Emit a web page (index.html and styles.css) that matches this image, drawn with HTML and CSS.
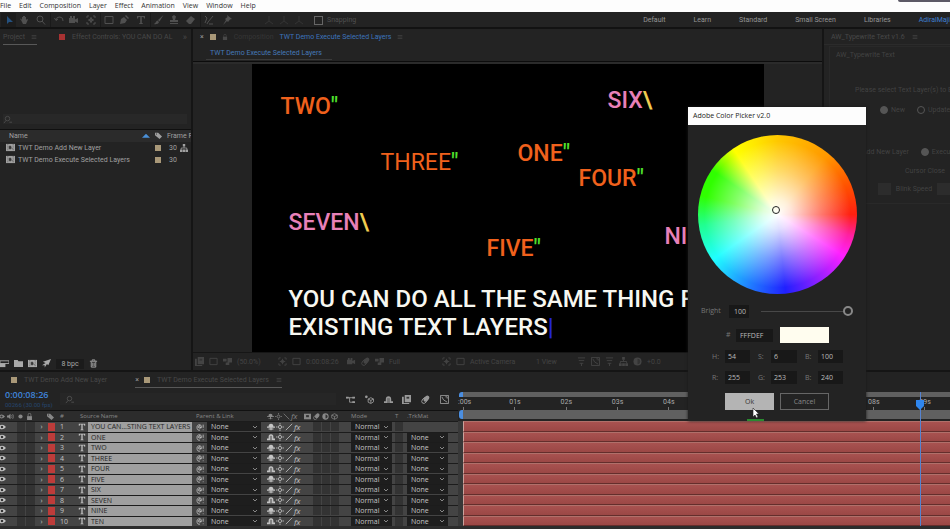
FILE: index.html
```html
<!DOCTYPE html>
<html lang="en">
<head>
<meta charset="utf-8">
<title>Composition editor</title>
<link rel="stylesheet" href="styles.css">
</head>
<body>
<svg class="defs" aria-hidden="true">
  <symbol id="arrow" viewBox="0 0 10 10"><path d="M3 1v8l2-2h4z" fill="currentColor"/></symbol>
  <symbol id="hand" viewBox="0 0 10 10"><path d="M2 5l-1-1 1-.5L3 5V2h1v2V1h1v3V1h1v3V2h1v3l1-1 1 .5L7 9H4z" fill="currentColor"/></symbol>
  <symbol id="zoom" viewBox="0 0 10 10"><circle cx="4" cy="4" r="3" class="ln"/><path d="M6 6l3 3.500" class="ln"/></symbol>
  <symbol id="rotate" viewBox="0 0 10 10"><path d="M2 5a3.500 3.500 0 0 1 7 1M.5 3L2 5.500 4 4" class="ln"/></symbol>
  <symbol id="camera" viewBox="0 0 10 10"><path d="M0 3h6v1.500L9 3v5L6 6.500V8H0zM1 1h2v2H1zm3 0h2v2H4z" fill="currentColor"/></symbol>
  <symbol id="anchor" viewBox="0 0 10 10"><path d="M1 3V1h2M7 1h2v2M9 7v2H7M3 9H1V7M5 2v6M2 5h6" class="ln"/><circle cx="5" cy="5" r="1.500" class="ln"/></symbol>
  <symbol id="rect" viewBox="0 0 10 10"><path d="M1 1.500h8v7H1z" class="ln"/></symbol>
  <symbol id="pen" viewBox="0 0 10 10"><path d="M1 9l1-5 3-2 3 3-2 3zM6 1l1-1 3 3-1 1z" fill="currentColor"/></symbol>
  <symbol id="type" viewBox="0 0 10 10"><path d="M1 1h8v2.500H8L7.500 2H5.800v6L7 8.500V9H3v-.5L4.200 8V2H2.500L2 3.500H1z" fill="currentColor"/></symbol>
  <symbol id="brush" viewBox="0 0 10 10"><path d="M9.500 0L4 5l1.500 1.500zM3.500 5.500C2 6 2 8 0 9c2 .5 4.500 0 5-2z" fill="currentColor"/></symbol>
  <symbol id="stamp" viewBox="0 0 10 10"><path d="M4 5L3 1.500 5 0l2 1.500L6 5h3v2H1V5zM1 8h8v1H1z" fill="currentColor"/></symbol>
  <symbol id="eraser" viewBox="0 0 10 10"><path d="M5 1l4 3-4 5H3L0 6z" fill="currentColor"/></symbol>
  <symbol id="roto" viewBox="0 0 10 10"><path d="M1 1l2 2-2 5M9 1L4 7l-1 2M5 9h4" class="ln"/></symbol>
  <symbol id="pin" viewBox="0 0 10 10"><path d="M5 0l5 4-2 .5L6 7 5 6 1 10l3-5-1-1 2.500-2z" fill="currentColor"/></symbol>
  <symbol id="axis" viewBox="0 0 10 10"><path d="M5 1v5L1 9m4-3l4 3" class="ln"/></symbol>
  <symbol id="burger" viewBox="0 0 10 10"><path d="M1 2.500h8M1 5h8M1 7.500h8" class="ln"/></symbol>
  <symbol id="search" viewBox="0 0 10 10"><circle cx="5" cy="4" r="2.500" class="ln"/><path d="M3.500 6L1 9M7 8h3" class="ln"/></symbol>
  <symbol id="film" viewBox="0 0 10 10"><path d="M0 1h10v8H0z" fill="currentColor"/><path d="M2 1v8M8 1v8" stroke="#333" stroke-width=".6" stroke-dasharray="1 1"/><path d="M3.500 3.500h2v3h-2zM6 5l1.500 2" fill="#333" stroke="#333" stroke-width=".6"/></symbol>
  <symbol id="tag" viewBox="0 0 10 10"><path d="M0 1h4.500L10 6.500 6.500 10 0 4.500zM2 2a.8.8 0 1 0 .1 0z" fill="currentColor" fill-rule="evenodd"/></symbol>
  <symbol id="tree" viewBox="0 0 10 10"><path d="M3.500 0h3v3h-3zM0 7h3v3H0zm7 0h3v3H7zM3.500 7h3v3h-3z" fill="currentColor"/><path d="M5 3v2M1.500 7V5h7v2" class="ln"/></symbol>
  <symbol id="folder" viewBox="0 0 10 10"><path d="M0 1h4l1 1.500h5V9H0z" fill="currentColor"/></symbol>
  <symbol id="footage" viewBox="0 0 10 10"><path d="M0 2h10v3H0z" class="ln"/><path d="M0 5h6v4H0z" fill="currentColor"/></symbol>
  <symbol id="plane" viewBox="0 0 10 10"><path d="M10 0L7 7 5.500 5.500 3 9.500 3 7 0 7 4 4.500 1 3z" fill="currentColor"/></symbol>
  <symbol id="trash" viewBox="0 0 10 10"><path d="M1 2.500h8M3.500 2V1h3v1M2.500 3v6h5V3M4.200 4v4M5.800 4v4" class="ln"/></symbol>
  <symbol id="lock" viewBox="0 0 10 10"><path d="M1.500 4.500h7V10h-7z" fill="currentColor"/><path d="M3 5V2.500a2 2 0 0 1 4 0V5" class="ln"/></symbol>
  <symbol id="eye" viewBox="0 0 10 10"><path d="M0 5q5-5.500 10 0-5 5.500-10 0z" fill="currentColor"/><circle cx="5" cy="5" r="1.600" fill="#333"/></symbol>
  <symbol id="speaker" viewBox="0 0 10 10"><path d="M0 3.500h2L5 1v8L2 6.500H0z" fill="currentColor"/><path d="M6.500 3q1.500 2 0 4M8 1.500q3 3.500 0 7" class="ln"/></symbol>
  <symbol id="dot" viewBox="0 0 10 10"><circle cx="5" cy="5" r="3" fill="currentColor"/></symbol>
  <symbol id="shy" viewBox="0 0 10 10"><path d="M2 4.500a3 3.500 0 0 1 6 0zM0 4.500h10v1.300H0zM4.300 5h1.400v4H4.300zM2 7h6v1H2z" fill="currentColor"/></symbol>
  <symbol id="shyon" viewBox="0 0 10 10"><path d="M2 5a3 3.500 0 0 1 6 0v2h2v2H0V7h2z" fill="currentColor"/><path d="M4.300 3.500V9M5.700 3.500V9" stroke="#333" stroke-width=".6"/></symbol>
  <symbol id="sun" viewBox="0 0 10 10"><circle cx="5" cy="5" r="2" class="ln"/><path d="M5 0v2M5 8v2M0 5h2M8 5h2" class="ln"/></symbol>
  <symbol id="slash" viewBox="0 0 10 10"><path d="M1 9L9 1" class="ln"/></symbol>
  <symbol id="bslash" viewBox="0 0 10 10"><path d="M1 1l8 8" class="ln"/></symbol>
  <symbol id="blend" viewBox="0 0 10 10"><path d="M0 1h10v8H0z" fill="currentColor"/><path d="M3 3h4v3H3z" fill="#333"/></symbol>
  <symbol id="frames" viewBox="0 0 10 10"><path d="M3 0h7v8H3zM0 2h2v7h6v1H0z" fill="currentColor"/><path d="M5 2h3v2H5z" fill="#333"/></symbol>
  <symbol id="blur" viewBox="0 0 10 10"><ellipse cx="6" cy="4" rx="2.500" ry="3.800" transform="rotate(40 6 4)" fill="currentColor"/><ellipse cx="4" cy="6" rx="2.500" ry="3.800" transform="rotate(40 4 6)" class="ln"/></symbol>
  <symbol id="half" viewBox="0 0 10 10"><circle cx="5" cy="5" r="4.500" fill="currentColor"/><path d="M5 2a3 3 0 0 1 0 6z" fill="#333"/></symbol>
  <symbol id="cube" viewBox="0 0 10 10"><path d="M5 1l4 2v4L5 9 1 7V3zM1 3l4 2 4-2M5 5v4" class="ln"/></symbol>
  <symbol id="cubedot" viewBox="0 0 10 10"><path d="M6.500 3L9.500 4.500v3L6.500 9.500 3.500 8V4.500zM3.500 4.500l3 1.500 3-1.500M6.500 6v3" class="ln"/><circle cx="1.500" cy="2" r="1.500" fill="currentColor"/></symbol>
  <symbol id="flow" viewBox="0 0 10 10"><path d="M0 3h9M4 3v5h5" class="ln"/><path d="M0 2h3v2H0zM7 2h3v2H7zM7 7h3v2H7z" fill="currentColor"/></symbol>
  <symbol id="graph" viewBox="0 0 10 10"><path d="M.5.5h9v9h-9z" class="ln"/><path d="M2 2q1 4 6 6M6 2h2v2" class="ln"/></symbol>
  <symbol id="whip" viewBox="0 0 10 10"><path d="M6 5a1.500 1.500 0 1 1-1-1.500V6q2 1 2-1.500A3 3.500 0 1 0 5 9M9 2v4M9 8v1" class="ln"/></symbol>
  <symbol id="bars" viewBox="0 0 10 10"><path d="M1 1h8M2 4h6M3 7h4M5 7v3" class="ln"/></symbol>
  <symbol id="cloud" viewBox="0 0 10 10"><path d="M0 2h4v3H0zM5 1h5v5H5zM3 6h4v3H3z" fill="currentColor"/></symbol>
</svg>

<nav class="menu">
  <a href="#">File</a><a href="#">Edit</a><a href="#">Composition</a><a href="#">Layer</a><a href="#">Effect</a><a href="#">Animation</a><a href="#">View</a><a href="#">Window</a><a href="#">Help</a>
  <i class="grip"></i>
</nav>

<header class="toolbar">
  <div class="tools">
    <button class="active" aria-label="Selection"><svg><use href="#arrow"/></svg></button>
    <button aria-label="Hand"><svg><use href="#hand"/></svg></button>
    <button class="end" aria-label="Zoom"><svg><use href="#zoom"/></svg></button>
    <button aria-label="Rotate"><svg><use href="#rotate"/></svg></button>
    <button aria-label="Camera"><svg><use href="#camera"/></svg></button>
    <button class="end" aria-label="Anchor"><svg><use href="#anchor"/></svg></button>
    <button aria-label="Rectangle"><svg><use href="#rect"/></svg></button>
    <button aria-label="Pen"><svg><use href="#pen"/></svg></button>
    <button class="end" aria-label="Type"><svg><use href="#type"/></svg></button>
    <button aria-label="Brush"><svg><use href="#brush"/></svg></button>
    <button aria-label="Stamp"><svg><use href="#stamp"/></svg></button>
    <button class="end" aria-label="Eraser"><svg><use href="#eraser"/></svg></button>
    <button aria-label="Roto"><svg><use href="#roto"/></svg></button>
    <button class="wide" aria-label="Pin"><svg><use href="#pin"/></svg></button>
    <button class="faint" aria-label="Local axis"><svg><use href="#axis"/></svg></button>
    <button class="faint" aria-label="World axis"><svg><use href="#axis"/></svg></button>
    <button class="faint" aria-label="View axis"><svg><use href="#axis"/></svg></button>
    <label class="snap"><input type="checkbox">Snapping</label>
  </div>
  <nav class="spaces">
    <a href="#">Default</a><a href="#">Learn</a><a href="#">Standard</a><a href="#">Small Screen</a><a href="#">Libraries</a><a href="#" class="on">AdiralMaji</a>
  </nav>
</header>

<main class="work">
  <section class="project">
    <div class="tabs">
      <span class="tab under">Project <svg><use href="#burger"/></svg></span>
      <span class="tab fx"><i class="sw red"></i>Effect Controls: YOU CAN DO AL</span>
      <span class="more">»</span>
    </div>
    <div class="preview"></div>
    <label class="find"><svg><use href="#search"/></svg><input type="text" aria-label="Search project"></label>
    <table class="items">
      <thead><tr><th class="name">Name</th><th class="sort"><i class="up"></i></th><th class="tagcol"><svg><use href="#tag"/></svg></th><th class="rate">Frame R</th></tr></thead>
      <tbody>
        <tr><td class="name" colspan="2"><svg><use href="#film"/></svg>TWT Demo Add New Layer</td><td><i class="sw"></i></td><td class="rate">30<svg><use href="#tree"/></svg></td></tr>
        <tr><td class="name" colspan="2"><svg><use href="#film"/></svg>TWT Demo Execute Selected Layers</td><td><i class="sw"></i></td><td class="rate">30</td></tr>
      </tbody>
    </table>
    <footer class="projfoot">
      <svg><use href="#footage"/></svg><svg><use href="#folder"/></svg><svg><use href="#film"/></svg><svg><use href="#plane"/></svg><button>8 bpc</button><svg><use href="#trash"/></svg>
    </footer>
  </section>

  <section class="comp">
    <div class="tabs">
      <span class="close">×</span><i class="sw"></i><svg><use href="#lock"/></svg><span class="dim">Composition</span><a href="#">TWT Demo Execute Selected Layers</a><svg><use href="#burger"/></svg>
    </div>
    <div class="crumb"><a href="#">TWT Demo Execute Selected Layers</a></div>
    <div class="viewer">
      <div class="canvas">
        <span class="t two">TWO<b>"</b></span>
        <span class="t three">THREE<b>"</b></span>
        <span class="t one">ONE<b>"</b></span>
        <span class="t four">FOUR<b>"</b></span>
        <span class="t five">FIVE<b>"</b></span>
        <span class="t pink six">SIX<b>\</b></span>
        <span class="t pink seven">SEVEN<b>\</b></span>
        <span class="t pink nine">NINE<b>\</b></span>
        <p class="t main">YOU CAN DO ALL THE SAME THING FOR<br>EXISTING TEXT LAYERS<b>|</b></p>
      </div>
    </div>
    <footer class="compfoot">
      <svg><use href="#frames"/></svg><svg><use href="#rect"/></svg><svg><use href="#cloud"/></svg><span>(50.0%)</span><svg><use href="#anchor"/></svg><svg><use href="#rect"/></svg><span>0:00:08:26</span><svg><use href="#camera"/></svg><svg><use href="#blur"/></svg><svg><use href="#cloud"/></svg><span class="full">Full</span><svg><use href="#anchor"/></svg><svg><use href="#rect"/></svg><span class="cam">Active Camera</span><span>1 View</span><svg><use href="#bars"/></svg><svg><use href="#graph"/></svg><svg><use href="#bars"/></svg><svg><use href="#tree"/></svg><svg><use href="#half"/></svg><span>+0.0</span>
    </footer>
  </section>

  <aside class="script">
    <div class="tabs">AW_Typewrite Text v1.6 <svg><use href="#burger"/></svg></div>
    <div class="body">
      <h2>AW_Typewrite Text</h2>
      <p class="hint">Please select Text Layer(s) to E</p>
      <div class="opts"><label><input type="radio" name="m" checked>New</label><label><input type="radio" name="m">Update</label></div>
      <div class="opts second"><span>Add New Layer</span><label><input type="radio" name="x" checked>Execu</label></div>
      <p class="cursor">Cursor Close</p>
      <label class="blink"><input type="text" aria-label="Cursor"><span>Blink Speed</span><input type="text" aria-label="Speed"></label>
    </div>
  </aside>
</main>

<section class="timeline">
  <div class="left">
    <div class="ttabs"><span class="ttab"><i class="sw"></i>TWT Demo Add New Layer</span><span class="ttab under"><em>×</em><i class="sw"></i>TWT Demo Execute Selected Layers <svg><use href="#burger"/></svg></span></div>
    <div class="timebar">
      <div class="time"><strong>0:00:08:26</strong><small>00266 (30.00 fps)</small></div>
      <label class="tfind"><svg><use href="#search"/></svg><input type="text" aria-label="Search layers"></label>
      <div class="tbtns"><svg><use href="#flow"/></svg><svg><use href="#cubedot"/></svg><svg><use href="#shyon"/></svg><svg><use href="#frames"/></svg><svg><use href="#blur"/></svg><svg><use href="#graph"/></svg></div>
    </div>
    <table class="layers">
      <thead><tr>
        <th class="av"><svg><use href="#eye"/></svg><svg><use href="#speaker"/></svg></th><th><svg><use href="#dot"/></svg></th><th><svg><use href="#lock"/></svg></th><th></th><th><svg><use href="#tag"/></svg></th><th>#</th><th class="source">Source Name</th><th class="parent">Parent &amp; Link</th>
        <th class="sws"><svg><use href="#shy"/></svg><svg><use href="#sun"/></svg><svg><use href="#bslash"/></svg><i>fx</i></th>
        <th class="boxes"><svg><use href="#blend"/></svg><svg><use href="#blur"/></svg><svg><use href="#half"/></svg><svg><use href="#cube"/></svg></th>
        <th class="mode">Mode</th><th class="tcol">T</th><th class="trk">.TrkMat</th>
      </tr></thead>
      <tbody id="layers"></tbody>
    </table>
  </div>
  <div class="right">
    <div class="gap"></div>
    <div class="nav"></div>
    <div class="ruler"><span>:00s</span><span>01s</span><span>02s</span><span>03s</span><span>04s</span><span>05s</span><span>06s</span><span>07s</span><span>08s</span><span>09s</span></div>
    <div class="area"></div>
    <div class="tracks" id="tracks"></div>
    <div class="head"><svg viewBox="0 0 8 10"><path d="M0 0h8v6L4 10 0 6z" fill="#2f86ee"/></svg></div>
  </div>
</section>

<form class="picker" role="dialog" aria-labelledby="pt">
  <h1 id="pt">Adobe Color Picker v2.0</h1>
  <div class="wheel"><i></i></div>
  <div class="bright"><label for="br">Bright</label><input id="br" type="text" value="100"><input type="range" min="0" max="100" value="100" aria-label="Brightness"></div>
  <div class="hex"><label for="hx">#</label><input id="hx" type="text" value="FFFDEF"><i class="chip"></i></div>
  <div class="nums">
    <label for="h">H:</label><input id="h" type="text" value="54"><label for="s">S:</label><input id="s" type="text" value="6"><label for="b">B:</label><input id="b" type="text" value="100">
    <label for="r">R:</label><input id="r" type="text" value="255"><label for="g">G:</label><input id="g" type="text" value="253"><label for="bl">B:</label><input id="bl" type="text" value="240">
  </div>
  <div class="btns"><button type="button" class="ok">Ok</button><button type="button">Cancel</button></div>
  <i class="prog"></i>
  <svg class="pointer" viewBox="0 0 8 12"><path d="M1 1v9l2-2 1.500 3 1.500-1-1.500-3H7z" fill="#fff" stroke="#222" stroke-width=".6"/></svg>
</form>
<script src="app.js"></script>
</body>
</html>
```
FILE: app.js
```js
const names = ["YOU CAN...STING TEXT LAYERS", "ONE", "TWO", "THREE", "FOUR", "FIVE", "SIX", "SEVEN", "NINE", "TEN"];
const icon = id => `<svg><use href="#${id}"/></svg>`;
const pick = (label, value) => `<select aria-label="${label}"><option>${value}</option></select>`;

document.getElementById("layers").innerHTML = names.map((name, i) => `
  <tr>
    <td class="av">${icon("eye")}</td><td class="box"></td><td class="box"></td>
    <td class="twirl">›</td><td><i class="chip"></i></td><td class="num">${i + 1}</td>
    <td class="tt">${icon("type")}</td><td class="lname">${name}</td>
    <td class="whip">${icon("whip")}</td><td>${pick("Parent", "None")}</td>
    <td class="sws">${icon([1, 4, 7, 9].includes(i) ? "shyon" : "shy")}${icon("sun")}${icon("slash")}<i>fx</i></td>
    <td class="boxes"><u></u><u></u><u></u></td>
    <td>${pick("Mode", "Normal")}</td><td class="tcol"><u></u></td>
    <td class="trk">${i ? pick("Track matte", "None") : ""}</td>
  </tr>`).join("");

document.getElementById("tracks").innerHTML = names.map(() => "<div></div>").join("");
```
FILE: styles.css
```css
* { box-sizing: border-box; }
html, body { margin: 0; height: 100%; }
body {
  display: flex; flex-direction: column; position: relative; overflow: hidden;
  background: #151515; color: #a0a0a0;
  font: 7px/10px Roboto, sans-serif;
}
a { color: inherit; text-decoration: none; }
button, input, select { font: inherit; color: inherit; border: 0; padding: 0; margin: 0; background: none; min-width: 0; outline: 0; }
h1, h2, p { margin: 0; font: inherit; }
table { border-collapse: collapse; border-spacing: 0; }
th, td { padding: 0; font-weight: 400; text-align: left; }
svg { width: 9px; height: 9px; flex: none; display: block; }
.ln { fill: none; stroke: currentColor; stroke-width: 1; }
.defs { position: absolute; width: 0; height: 0; }
.sw { width: 6px; height: 6px; background: #a99878; flex: none; display: block; }
.sw.red { background: #a83232; }
.menu, .picker, .layers { font-family: "Open Sans", sans-serif; }

.menu { display: flex; gap: 8px; height: 12px; flex: none; background: #fdfdfd; color: #333; line-height: 12px; }
.grip { margin-left: auto; width: 52px; height: 2px; background: #5c5966; border-radius: 0 0 0 2px; }

.toolbar { display: flex; justify-content: space-between; height: 17px; flex: none; background: #232323; border-bottom: 2px solid #121212; overflow: hidden; }
.tools { display: flex; align-items: center; color: #505050; padding: 1px 0 0 1px; }
.tools svg { width: 10px; height: 10px; }
.tools button { width: 15px; height: 15px; display: grid; place-items: center; }
.tools .active { color: #24507e; background: #1c1c1c; }
.tools .end { width: 20px; border-right: 1px solid #1a1a1a; }
.tools .wide { width: 45px; padding-right: 23px; }
.tools .faint { color: #343434; }
.snap { display: flex; align-items: center; gap: 4px; margin-left: 8px; }
.snap input { appearance: none; width: 9px; height: 9px; border: 1px solid #666; }
.spaces { display: flex; gap: 28px; line-height: 17px; color: #969696; white-space: nowrap; }
.spaces .on { color: #3f7fd0; }

.work { flex: 1; min-height: 0; display: grid; grid-template-columns: 191px 1fr 126px; gap: 2px; }
.work > * { background: #232323; min-width: 0; min-height: 0; overflow: hidden; display: flex; flex-direction: column; }
.tabs { display: flex; align-items: center; height: 16px; flex: none; color: #484848; white-space: nowrap; }
.tabs svg { width: 6px; height: 6px; }

.project .tabs { padding-left: 3px; }
.tab { display: flex; align-items: center; height: 15px; gap: 6px; }
.under { border-bottom: 1px solid #585858; }
.tab.fx { margin-left: 22px; gap: 7px; }
.more { margin-left: auto; padding-right: 4px; font-size: 9px; }
.preview { height: 69px; }
.find { display: flex; align-items: center; height: 10px; margin: 0 4px 5px 3px; background: #282828; color: #4c4c4c; }
.items { border-top: 1px solid #101010; width: 100%; table-layout: fixed; }
.items th { height: 12px; background: #2b2b2b; }
.items td { height: 12px; }
.items .name { width: 131px; padding-left: 6px; white-space: nowrap; }
.items th.name { padding-left: 9px; }
.items .name svg { display: inline-block; vertical-align: -2px; margin-right: 3px; }
.items .sort { width: 24px; }
.items .tagcol { width: 10px; }
.items .rate { padding-left: 2px; white-space: nowrap; }
.items td.rate { padding-left: 4px; }
.items .rate svg { display: inline-block; vertical-align: -2px; margin-left: 3px; width: 8px; height: 8px; }
.items th svg { width: 7px; height: 7px; }
.up { display: block; margin-left: 11px; width: 8px; height: 4px; background: #4a90d8; clip-path: polygon(50% 0, 100% 100%, 0 100%); }
.projfoot { margin-top: auto; height: 13px; display: flex; align-items: center; gap: 5px; color: #aaa; }
.projfoot button { width: 28px; height: 10px; background: #1b1b1b; }

.comp .tabs { padding-left: 7px; gap: 6px; }
.comp .tabs a { color: #3d74bd; }
.comp .tabs .dim { color: #363636; }
.comp .tabs .close { color: #999; }
.crumb { height: 17px; flex: none; padding: 3px 0 0 13px; border-bottom: 1px solid #0c0c0c; }
.crumb a { display: inline-block; width: 126px; height: 12px; padding-left: 4px; color: #4579b9; border-bottom: 1px solid #3a3a3a; white-space: nowrap; }
.viewer { flex: 1; min-height: 0; border-top: 2px solid #2b2b2b; display: flex; justify-content: center; }
.canvas { position: relative; height: 100%; aspect-ratio: 16 / 9; background: #000; overflow: hidden; }
.t { position: absolute; font: 500 23px/28px Roboto, sans-serif; color: #f0611c; white-space: nowrap; }
.t b { font-weight: 500; color: #4fe02c; }
.pink { color: #e880b8; }
.pink b { color: #f0cc50; }
.two { left: 29px; top: 29px; }
.three { left: 129px; top: 85px; font-weight: 400; }
.one { left: 266px; top: 76px; }
.four { left: 327px; top: 101px; }
.five { left: 235px; top: 171px; }
.six { left: 356px; top: 23px; }
.seven { left: 37px; top: 145px; }
.nine { left: 413px; top: 159px; }
.main { left: 37px; top: 221px; color: #f7f7f0; font-size: 24px; }
.main b { color: #2525d8; }
.compfoot { height: 18px; flex: none; display: flex; align-items: center; gap: 5px; padding-left: 2px; color: #444; white-space: nowrap; border-top: 1px solid #161616; }
.compfoot span { width: 36px; }
.compfoot .full { width: 48px; }
.compfoot .cam { width: 61px; }

.script { color: #424242; white-space: nowrap; }
.script .tabs { gap: 7px; padding-left: 7px; border-bottom: 1px solid #2b2b2b; }
.body { margin: 1px 0 0 5px; border: 1px solid #292929; border-right: 0; padding: 3px 0 0 6px; }
.hint { padding: 25px 0 0 19px; }
.opts { display: flex; gap: 12px; margin: 10px 0 0 44px; }
.opts label { display: flex; align-items: center; gap: 3px; }
.opts input { appearance: none; width: 8px; height: 8px; border: 1px solid #555; border-radius: 50%; }
.opts input:checked { background: #555; }
.opts.second { margin: 32px 0 0 26px; }
.cursor { margin: 9px 0 0 69px; }
.blink { display: flex; align-items: center; gap: 5px; margin: 7px 0 8px 42px; }
.blink input { width: 18px; height: 12px; background: #2c2c2c; }

.timeline { flex: none; display: grid; grid-template-columns: 458px 1fr; height: 157px; margin-top: 2px; background: #232323; border-bottom: 3px solid #2c2c2c; }
.left, .right { display: flex; flex-direction: column; min-width: 0; min-height: 0; position: relative; }
.ttabs { display: flex; gap: 28px; height: 16px; padding-left: 11px; flex: none; color: #484848; white-space: nowrap; }
.ttab { display: flex; align-items: center; gap: 7px; }
.ttab em { color: #999; font-style: normal; margin-right: -2px; }
.ttab svg { width: 6px; height: 6px; }
.timebar { display: flex; height: 22px; flex: none; align-items: center; }
.time { width: 60px; padding-left: 5px; }
.time strong, .time small { display: block; white-space: nowrap; }
.time strong { font: 600 9px/12px "Open Sans", sans-serif; color: #3f83da; }
.time small { font-size: 6px; line-height: 8px; color: #26466e; }
.tfind { flex: 1; display: flex; align-items: center; height: 12px; background: #262626; color: #505050; padding-left: 5px; }
.tbtns { display: flex; padding: 0 9px 0 10px; width: 122px; justify-content: space-between; color: #999; }
.tfind input, .find input { flex: 1; }

.layers { display: flex; flex-direction: column; flex: 1; min-height: 0; }
.layers tr { display: grid; grid-template-columns: 17px 9px 10px 11px 13px 18px 10px 104px 15px 54px 52px 38px 41px 15px 41px 10px; }
.layers thead tr { height: 11px; align-items: center; background: #2c2c2c; border-top: 1px solid #111; font-size: 6px; color: #888; }
.layers thead svg { width: 7px; height: 7px; }
.layers tbody { flex: 1; min-height: 0; display: grid; grid-template-rows: repeat(10, 1fr); }
.layers tbody tr { min-height: 0; background: #444; border-top: 1px solid #1c1c1c; color: #c4c4c4; overflow: hidden; line-height: 9px; }
.layers td { display: flex; align-items: center; min-width: 0; min-height: 0; }
.layers svg { width: 8px; height: 8px; }
.layers .av { display: flex; gap: 2px; margin-left: -2px; }
.layers .source { grid-column: span 2; padding-left: 2px; }
.layers thead .boxes { margin-left: -9px; gap: 2px; }
.box { background: #333; border-right: 1px solid #444; }
.twirl { justify-content: center; }
.chip { display: block; }
.layers .chip { width: 7px; height: 8px; margin-left: 1px; background: #bd3c3a; }
.layers .lname { background: #9f9f9f; color: #252525; padding-left: 3px; white-space: nowrap; }
.layers .whip { justify-content: center; }
.layers .parent { grid-column: span 2; padding-left: 4px; }
.layers select { appearance: none; width: 100%; height: 9px; line-height: 9px; padding-left: 4px; background: #1e1e1e url("data:image/svg+xml,%3Csvg xmlns='http://www.w3.org/2000/svg' viewBox='0 0 6 4'%3E%3Cpath d='M1 1l2 2 2-2' fill='none' stroke='%23888'/%3E%3C/svg%3E") right 3px center / 6px 4px no-repeat; }
.sws { display: flex; align-items: center; gap: 1px; padding-left: 6px; font-size: 8px; }
.boxes { display: flex; align-self: stretch; align-items: center; gap: 1px; }
.boxes u, .tcol u { width: 8px; height: 9px; background: #333; }
.layers .tcol { display: flex; padding-left: 3px; }

.gap { height: 20px; flex: none; }
.nav { height: 5px; flex: none; margin-left: 1px; background: #606060; border-left: 4px solid #4b8ee0; border-radius: 3px 0 0 0; }
.ruler { height: 13px; flex: none; margin-left: 5px; display: grid; grid-template-columns: repeat(9, 2fr) 1fr; line-height: 10px; color: #aaa; }
.ruler span { margin-left: -5px; background: linear-gradient(#777, #777) 5px 100% / 1px 3px no-repeat; }
.area { height: 9px; flex: none; margin: 0 0 2px 1px; background: #606060; border-left: 4px solid #4b8ee0; border-radius: 3px 0 0 3px; }
.tracks { flex: 1; min-height: 0; display: grid; grid-template-rows: repeat(10, 1fr); background: #383838; padding-left: 5px; }
.tracks div { background: linear-gradient(#a85250, #9b4745); border-top: 1px solid #b0706a; border-bottom: 1px solid #642e2c; border-left: 1px solid #c9a29c; }
.head { position: absolute; left: 94%; top: 20px; bottom: 0; width: 1px; background: #5583d0; }
.head svg { width: 8px; height: 10px; margin: 8px 0 0 -4px; }

.picker { position: absolute; left: 688px; top: 107px; width: 178px; background: #232323; box-shadow: 0 0 3px #1a1a1a; display: flex; flex-direction: column; padding-bottom: 11px; color: #777; }
.picker h1 { height: 18px; line-height: 18px; padding-left: 5px; background: #fdfdfd; color: #222; }
.wheel {
  width: 159px; aspect-ratio: 1; margin: 10px 0 0 10px; border-radius: 50%; display: grid; place-items: center;
  background:
    radial-gradient(circle closest-side, #fff 0, rgba(255,255,255,.85) 18%, rgba(255,255,255,.4) 55%, transparent 92%),
    conic-gradient(#ffc800 0deg, #ff9800 40deg, #ff5000 68deg, #ff2010 90deg, #ff20a0 106deg, #ff20ff 122deg, #9020ff 148deg, #2020ff 174deg, #2080ff 202deg, #20ffff 235deg, #20ff90 262deg, #30ff00 284deg, #30ff00 304deg, #ffff00 326deg, #ffe800 342deg, #ffc800 360deg);
}
.wheel i { width: 8px; height: 8px; margin: 0 3px 9px 0; border: 1px solid #222; border-radius: 50%; }
.bright { display: flex; align-items: center; height: 14px; margin: 10px 13px 0; }
.bright label { width: 28px; }
.picker input[type=text] { background: #181818; color: #bbb; height: 13px; }
.bright input[type=text] { width: 20px; padding-left: 5px; }
.bright input[type=range] { appearance: none; flex: 1; height: 10px; margin-left: 12px; background: linear-gradient(#484848, #484848) center / 100% 1px no-repeat; }
.bright input[type=range]::-webkit-slider-thumb { appearance: none; width: 10px; height: 10px; border: 2px solid #888; border-radius: 50%; background: #232323; }
.hex { display: flex; align-items: center; margin: 9px 0 0 38px; }
.hex label { width: 10px; }
.hex input { width: 37px; padding-left: 4px; margin-right: 7px; }
.hex .chip { width: 49px; height: 16px; background: #fffdef; }
.nums { display: grid; grid-template-columns: 13px 25px 21px 26px 21px 25px; row-gap: 8px; margin: 7px 0 0 24px; align-items: center; }
.nums label:nth-of-type(3n+2), .nums label:nth-of-type(3n) { padding-left: 8px; }
.nums input { width: 100%; padding-left: 3px; }
.btns { display: flex; gap: 6px; margin: 9px 0 0 37px; }
.btns button { width: 49px; height: 17px; border: 1px solid #666; color: #888; }
.btns .ok { background: #b4b4b4; border-color: #b4b4b4; color: #333; }
.prog { position: absolute; left: 59px; bottom: 0; width: 17px; height: 2px; background: #2a8a30; }
.pointer { position: absolute; left: 64px; top: 300px; width: 8px; height: 12px; }
```
